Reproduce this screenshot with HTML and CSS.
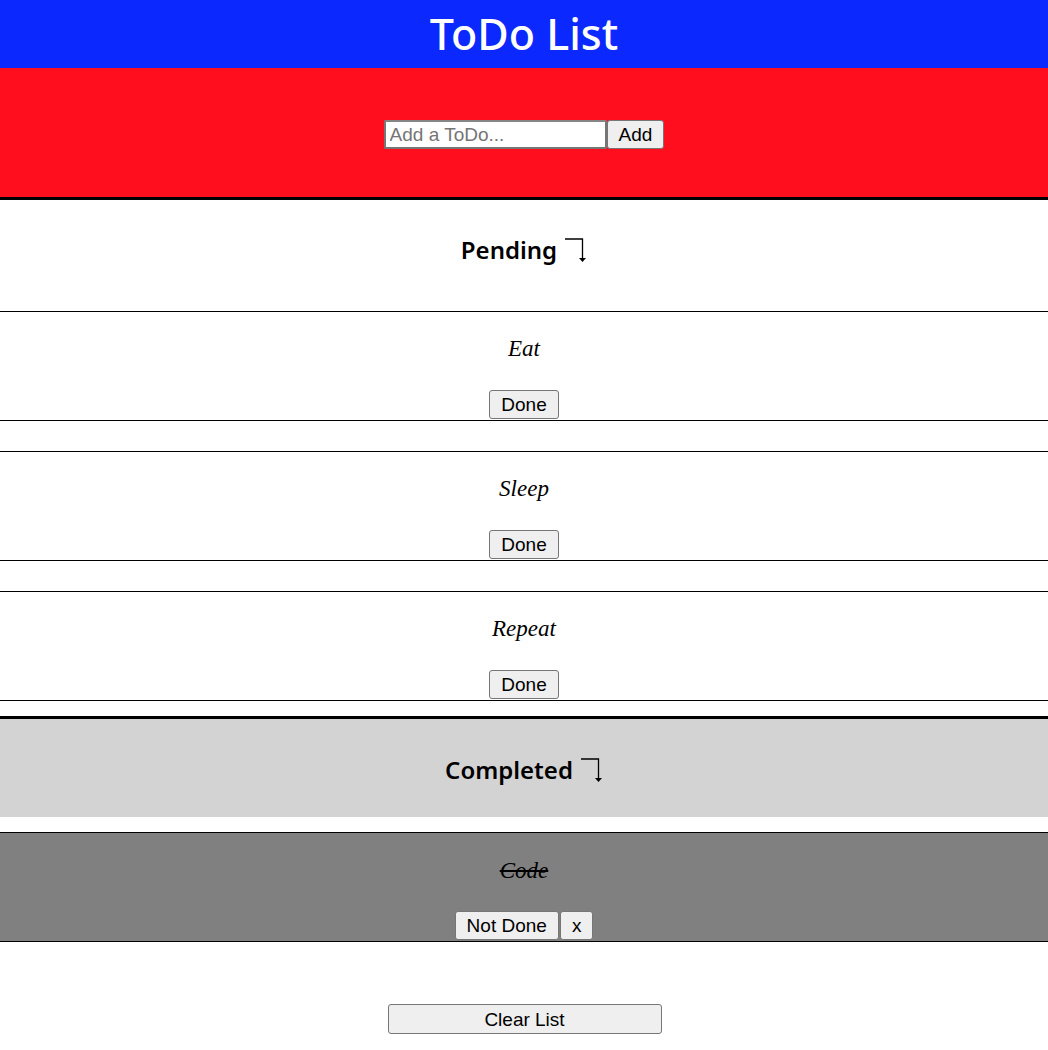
FILE: index.html
```html
<!DOCTYPE html>
<html>
<head>
<meta charset="utf-8">
<title>ToDo List</title>
<link rel="stylesheet" href="styles.css">
</head>
<body>
<header class="top">
  <h1 class="title">ToDo List</h1>
</header>
<section class="add">
  <form class="add-form">
    <input class="add-input" type="text" placeholder="Add a ToDo..."><button class="btn" type="button">Add</button>
  </form>
</section>
<section class="pending">
  <h2 class="sec-title">Pending <svg class="arrow" width="22" height="25" viewBox="0 0 22 25"><path d="M0 1 H17.5 V21" fill="none" stroke="#000" stroke-width="1.3"/><path d="M14 20 H21 L17.5 24 Z" fill="#000"/></svg></h2>
  <ul class="list">
    <li class="item"><p class="item-text">Eat</p><div class="actions"><button class="btn">Done</button></div></li>
    <li class="item"><p class="item-text">Sleep</p><div class="actions"><button class="btn">Done</button></div></li>
    <li class="item"><p class="item-text">Repeat</p><div class="actions"><button class="btn">Done</button></div></li>
  </ul>
</section>
<section class="completed">
  <h2 class="sec-title comp-title">Completed <svg class="arrow" width="22" height="25" viewBox="0 0 22 25"><path d="M0 1 H17.5 V21" fill="none" stroke="#000" stroke-width="1.3"/><path d="M14 20 H21 L17.5 24 Z" fill="#000"/></svg></h2>
  <ul class="list comp-list">
    <li class="item done-item"><p class="item-text struck">Code</p><div class="actions"><button class="btn">Not Done</button><button class="btn">x</button></div></li>
  </ul>
</section>
<div class="clear-wrap"><button class="btn clear">Clear List</button></div>
</body>
</html>
```
FILE: styles.css
```css
* { box-sizing: border-box; }
body {
  margin: 0;
  font-family: "Noto Sans", sans-serif;
  background: #fff;
  color: #000;
}
.top {
  background: #0b29ff;
  height: 68px;
  display: flex;
  align-items: center;
  justify-content: center;
}
.title {
  margin: 0;
  color: #fff;
  font-size: 43px;
  font-weight: 500;
  line-height: 1;
  padding-bottom: 2px;
}
.add {
  background: #ff0e1e;
  height: 129px;
  padding-top: 52px;
  display: flex;
  justify-content: center;
}
.add-form {
  display: flex;
  align-items: flex-start;
  height: 29px;
}
.add-input {
  width: 223px;
  height: 29px;
  font-family: "Liberation Sans", Arial, sans-serif;
  font-size: 19px;
  padding: 1px 4px;
  border: 2px solid #767676;
  border-top-color: #858585;
  border-radius: 2px;
  background: #fff;
  color: #000;
}
.add-input::placeholder { color: #757575; }
.btn {
  font-family: "Liberation Sans", Arial, sans-serif;
  font-size: 19px;
  line-height: 21px;
  height: 29px;
  padding: 3px 11px;
  border: 1px solid #767676;
  border-radius: 3px;
  background: #efefef;
  color: #000;
  margin: 0;
}
.pending {
  border-top: 3px solid #000;
}
.sec-title {
  margin: 0;
  text-align: center;
  font-size: 24px;
  font-weight: 600;
  line-height: 30px;
  height: 111px;
  padding-top: 35px;
  display: flex;
  justify-content: center;
  align-items: flex-start;
  gap: 8px;
}
.arrow { margin-top: 3px; }
.list {
  list-style: none;
  margin: 0;
  padding: 0;
}
.item {
  border-top: 1px solid #000;
  border-bottom: 1px solid #000;
  height: 110px;
  margin-bottom: 30px;
  display: flex;
  flex-direction: column;
  align-items: center;
  padding-top: 22px;
}
.list .item:last-child { margin-bottom: 15px; }
.item-text {
  margin: 0;
  font-family: "Liberation Serif", serif;
  font-style: italic;
  font-size: 23px;
  line-height: 30px;
  height: 30px;
}
.actions {
  margin-top: 26px;
  display: flex;
  gap: 1px;
}
.completed {
  border-top: 3px solid #000;
}
.comp-title {
  background: #d3d3d3;
  height: 98px;
  padding-top: 36px;
  margin-bottom: 15px;
}
.comp-list .item:last-child { margin-bottom: 0; }
.done-item {
  background: #808080;
  padding-top: 23px;
}
.done-item .actions { margin-top: 25px; }
.struck { text-decoration: line-through; }
.clear-wrap {
  display: flex;
  justify-content: center;
  padding-top: 62px;
  padding-left: 1px;
}
.clear {
  width: 274px;
  height: 30px;
}
```
